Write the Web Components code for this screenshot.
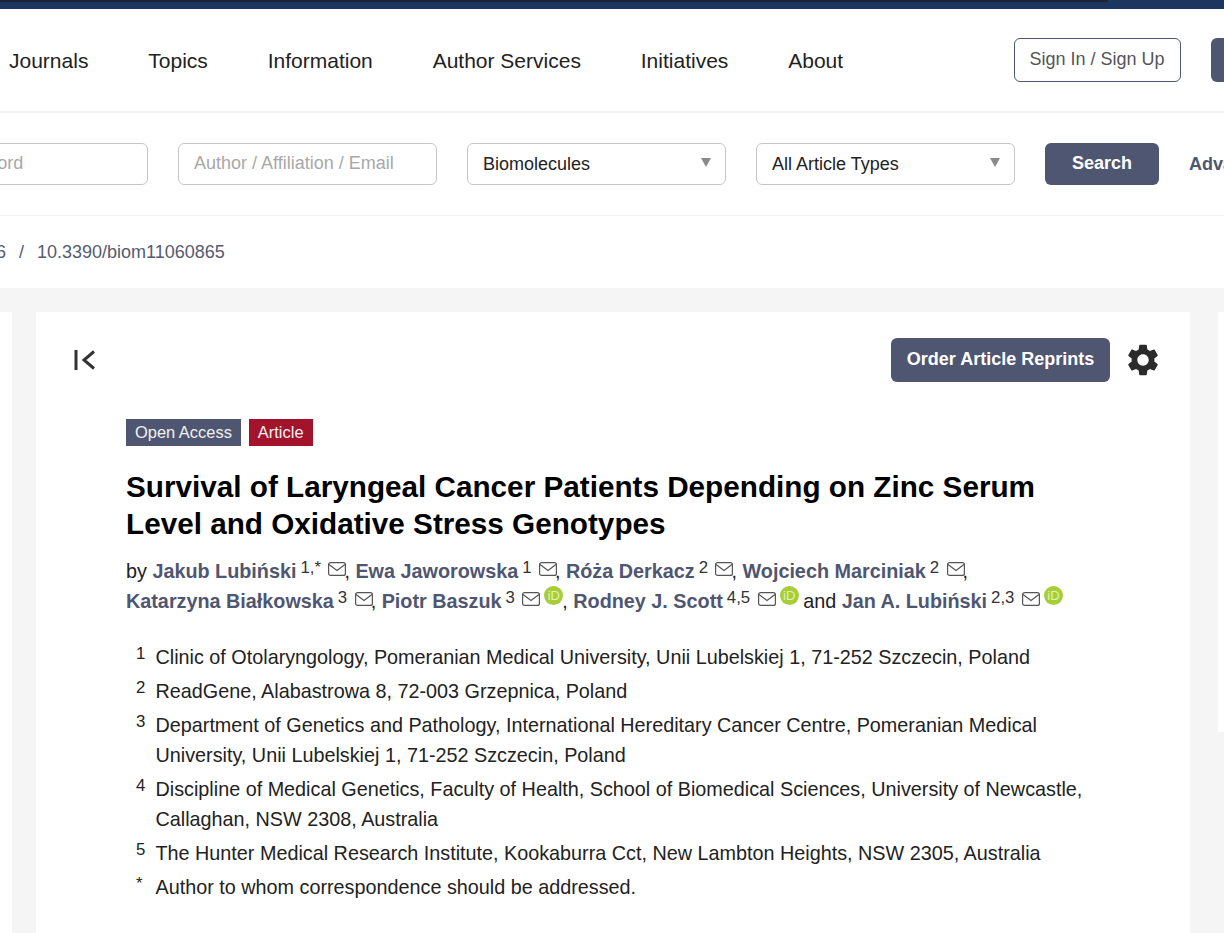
<!DOCTYPE html>
<html lang="en">
<head>
<meta charset="utf-8">
<title>Survival of Laryngeal Cancer Patients</title>
<style>
  html, body { margin: 0; height: 933px; overflow: hidden; background: #f5f5f5; }
  body { font-family: "Liberation Sans", Arial, sans-serif; color: #222; }
</style>
</head>
<body>
<site-topbar></site-topbar>
<site-nav>
  <nav-link>Journals</nav-link>
  <nav-link>Topics</nav-link>
  <nav-link>Information</nav-link>
  <nav-link>Author Services</nav-link>
  <nav-link>Initiatives</nav-link>
  <nav-link>About</nav-link>
</site-nav>
<search-bar>
  <search-field hint>Title / Keyword</search-field>
  <search-field hint>Author / Affiliation / Email</search-field>
  <search-field select>Biomolecules</search-field>
  <search-field select>All Article Types</search-field>
</search-bar>
<bread-crumbs></bread-crumbs>
<page-columns>
  <article-card>
    <span slot="tags"><tag-label>Open Access</tag-label><tag-label red>Article</tag-label></span>
    <span slot="title">Survival of Laryngeal Cancer Patients Depending on Zinc Serum Level and Oxidative Stress Genotypes</span>
    <span slot="authors">by <author-name affil="1,*">Jakub Lubiński</author-name>, <author-name affil="1">Ewa Jaworowska</author-name>, <author-name affil="2">Róża Derkacz</author-name>, <author-name affil="2">Wojciech Marciniak</author-name>, <author-name affil="3">Katarzyna Białkowska</author-name>, <author-name affil="3" orcid>Piotr Baszuk</author-name>, <author-name affil="4,5" orcid>Rodney J. Scott</author-name> and <author-name affil="2,3" orcid>Jan A. Lubiński</author-name></span>
    <affil-item n="1">Clinic of Otolaryngology, Pomeranian Medical University, Unii Lubelskiej 1, 71-252 Szczecin, Poland</affil-item>
    <affil-item n="2">ReadGene, Alabastrowa 8, 72-003 Grzepnica, Poland</affil-item>
    <affil-item n="3">Department of Genetics and Pathology, International Hereditary Cancer Centre, Pomeranian Medical University, Unii Lubelskiej 1, 71-252 Szczecin, Poland</affil-item>
    <affil-item n="4">Discipline of Medical Genetics, Faculty of Health, School of Biomedical Sciences, University of Newcastle, Callaghan, NSW 2308, Australia</affil-item>
    <affil-item n="5">The Hunter Medical Research Institute, Kookaburra Cct, New Lambton Heights, NSW 2305, Australia</affil-item>
    <affil-item n="*">Author to whom correspondence should be addressed.</affil-item>
  </article-card>
</page-columns>
<script>
// every element here is just a shadow root with fixed markup
function shadow(el, html) {
  el.attachShadow({ mode: "open" }).innerHTML = html;
}

customElements.define("site-topbar", class extends HTMLElement {
  connectedCallback() {
    shadow(this, `<style>
      :host { display: block; height: 9px; background: #1c3660; }
      div { width: 1108px; height: 2px; background: #1b2433; }
    </style><div></div>`);
  }
});

customElements.define("site-nav", class extends HTMLElement {
  connectedCallback() {
    shadow(this, `<style>
      :host { display: flex; align-items: center; height: 102px; padding-left: 9px; gap: 59.900px;
        background: #fff; border-bottom: 2px solid #f1f1f1; white-space: nowrap; }
      .sign { margin-left: 110.500px; height: 42px; width: 165px; flex: none; display: flex; align-items: center;
        justify-content: center; border: 1px solid #4f5671; border-radius: 6px; color: #555; font-size: 18px; }
      .sign span { padding-bottom: 1px; }
      .more { margin-left: -29px; width: 60px; height: 44px; flex: none; background: #4f5671; border-radius: 6px; }
    </style><slot></slot><div class="sign"><span>Sign In / Sign Up</span></div><div class="more"></div>`);
  }
});

customElements.define("nav-link", class extends HTMLElement {
  connectedCallback() {
    shadow(this, `<style>:host { display: block; padding-top: 2px; font-size: 21px; color: #222; }</style><slot></slot>`);
  }
});

customElements.define("search-bar", class extends HTMLElement {
  connectedCallback() {
    shadow(this, `<style>
      :host { display: flex; align-items: center; gap: 30px; height: 102px; margin-left: -111px;
        background: #fff; border-bottom: 1px solid #f1f1f1; white-space: nowrap; }
      .go { flex: none; width: 114px; height: 42px; padding-bottom: 2px; box-sizing: border-box; display: flex; align-items: center; justify-content: center;
        background: #4f5671; color: #fff; font-weight: bold; font-size: 18px; border-radius: 6px; }
      .adv { flex: none; color: #4f5671; font-weight: bold; font-size: 18px; }
    </style><slot></slot><div class="go">Search</div><div class="adv">Advanced</div>`);
  }
});

customElements.define("search-field", class extends HTMLElement {
  connectedCallback() {
    const isSelect = this.hasAttribute("select");
    shadow(this, `<style>
      :host { flex: none; display: flex; align-items: center; justify-content: space-between; box-sizing: border-box;
        width: 259px; height: 42px; padding: 0 15px ${isSelect ? 0 : 2}px; border: 1px solid #c6c6c6; border-radius: 6px; background: #fff;
        font-size: 18px; color: ${isSelect ? "#222" : "#a8a8a8"}; }
      i { width: 0; height: 0; margin: -3px -1px 0 0; border: 5px solid transparent; border-top: 9px solid #8a8a8a; border-bottom: 0; }
    </style><slot></slot>${isSelect ? "<i></i>" : ""}`);
  }
});

customElements.define("bread-crumbs", class extends HTMLElement {
  connectedCallback() {
    shadow(this, `<style>
      :host { display: flex; align-items: center; height: 72px; margin-left: -4px; background: #fff;
        font-size: 18px; color: #555b70; white-space: nowrap; }
      b { font-weight: normal; margin: 0 13px; }
    </style><span>6</span><b>/</b><span>10.3390/biom11060865</span>`);
  }
});

customElements.define("page-columns", class extends HTMLElement {
  connectedCallback() {
    shadow(this, `<style>
      :host { display: grid; grid-template-columns: 12px 1154px 6px; column-gap: 24px; padding-top: 24px; align-items: start; }
      .side { background: #fff; height: 621px; }
      .right { background: #fff; height: 420px; margin-left: 4px; width: 10px; }
    </style><div class="side"></div><slot></slot><div class="right"></div>`);
  }
});

const gear = "M19.14,12.94c0.04-0.3,0.06-0.61,0.06-0.94c0-0.32-0.02-0.64-0.07-0.94l2.03-1.58c0.18-0.14,0.23-0.41,0.12-0.61l-1.92-3.32c-0.12-0.22-0.37-0.29-0.59-0.22l-2.39,0.96c-0.5-0.38-1.03-0.7-1.62-0.94L14.4,2.81c-0.04-0.24-0.24-0.41-0.48-0.41h-3.84c-0.24,0-0.43,0.17-0.47,0.41L9.25,5.35C8.66,5.59,8.12,5.92,7.63,6.29L5.24,5.33c-0.22-0.08-0.47,0-0.59,0.22L2.74,8.87C2.62,9.08,2.66,9.34,2.86,9.48l2.03,1.58C4.84,11.36,4.8,11.69,4.8,12s0.02,0.64,0.07,0.94l-2.03,1.58c-0.18,0.14-0.23,0.41-0.12,0.61l1.92,3.32c0.12,0.22,0.37,0.29,0.59,0.22l2.39-0.96c0.5,0.38,1.03,0.7,1.62,0.94l0.36,2.54c0.05,0.24,0.24,0.41,0.48,0.41h3.84c0.24,0,0.44-0.17,0.47-0.41l0.36-2.54c0.59-0.24,1.13-0.56,1.62-0.94l2.39,0.96c0.22,0.08,0.47,0,0.59-0.22l1.92-3.32c0.12-0.22,0.07-0.47-0.12-0.61L19.14,12.94z M12,15.6c-1.98,0-3.6-1.62-3.6-3.6s1.62-3.6,3.6-3.6s3.6,1.62,3.6,3.6S13.98,15.6,12,15.6z";

customElements.define("article-card", class extends HTMLElement {
  connectedCallback() {
    shadow(this, `<style>
      :host { display: block; background: #fff; height: 621px; }
      .top { display: flex; align-items: center; height: 44px; padding: 26px 28px 0 38px; }
      .order { margin-left: auto; box-sizing: border-box; width: 219px; height: 44px; padding-bottom: 2px; display: flex; align-items: center; justify-content: center;
        background: #4f5671; color: #fff; font-weight: bold; font-size: 18px; border-radius: 6px; }
      .gear { margin-left: 14px; display: block; }
      .body { padding: 37px 90px 0; }
      .title { margin: 22px 0 0; font-size: 29.700px; line-height: 37px; font-weight: bold; color: #000; }
      .authors { margin-top: 14px; font-size: 19.800px; line-height: 30px; color: #222; }
      .list { margin-top: 26px; }
    </style>
    <div class="top">
      <svg width="22" height="20" viewBox="0 0 22 20"><path d="M2 0v20" stroke="#333" stroke-width="3" fill="none"/><path d="M20 1.500 10 10l10 8.500" stroke="#333" stroke-width="3" fill="none"/></svg>
      <div class="order">Order Article Reprints</div>
      <svg class="gear" width="38" height="38" viewBox="0 0 24 24"><path fill="#2b2b2b" d="${gear}"/></svg>
    </div>
    <div class="body">
      <slot name="tags"></slot>
      <h1 class="title"><slot name="title"></slot></h1>
      <div class="authors"><slot name="authors"></slot></div>
      <div class="list"><slot></slot></div>
    </div>`);
  }
});

customElements.define("tag-label", class extends HTMLElement {
  connectedCallback() {
    shadow(this, `<style>
      :host { display: inline-block; height: 27px; line-height: 27px; padding: 0 9px; margin-right: 8px;
        background: ${this.hasAttribute("red") ? "#a3142c" : "#4f5671"}; color: #f2f2f2; font-size: 16.450px; }
    </style><slot></slot>`);
  }
});

customElements.define("author-name", class extends HTMLElement {
  connectedCallback() {
    const orcid = this.hasAttribute("orcid");
    shadow(this, `<style>
      :host { display: inline; white-space: nowrap; }
      b { color: #4f5671; }
      sup { font-size: 16.800px; line-height: 0; vertical-align: 5px; margin-left: 4px; color: #333; }
      svg { vertical-align: 2px; margin: 0 -2px 0 2px; }
      .id { display: inline-block; width: 19px; height: 19px; margin: -7px -1px -7px 6px; border-radius: 50%; background: #a6ce39;
        color: #e4f0b8; font-size: 13px; line-height: 19px; text-align: center; vertical-align: 8px; }
    </style><b><slot></slot></b><sup>${this.getAttribute("affil")}</sup> <svg width="18" height="14" viewBox="0 0 18 14"><rect x=".6" y=".6" width="16.800" height="12.800" rx="2" fill="none" stroke="#555" stroke-width="1.200"/><path d="M1 2.500 9 8.500l8-6" fill="none" stroke="#555" stroke-width="1.200"/></svg>${orcid ? '<span class="id">iD</span>' : ""}`);
  }
});

customElements.define("affil-item", class extends HTMLElement {
  connectedCallback() {
    shadow(this, `<style>
      :host { display: grid; grid-template-columns: 19.500px 1fr; margin: 0 0 4px 10px; font-size: 19.800px; line-height: 30px; color: #222; }
      sup { font-size: 16.800px; line-height: 23px; display: block; }
    </style><sup>${this.getAttribute("n")}</sup><div><slot></slot></div>`);
  }
});
</script>
</body>
</html>
